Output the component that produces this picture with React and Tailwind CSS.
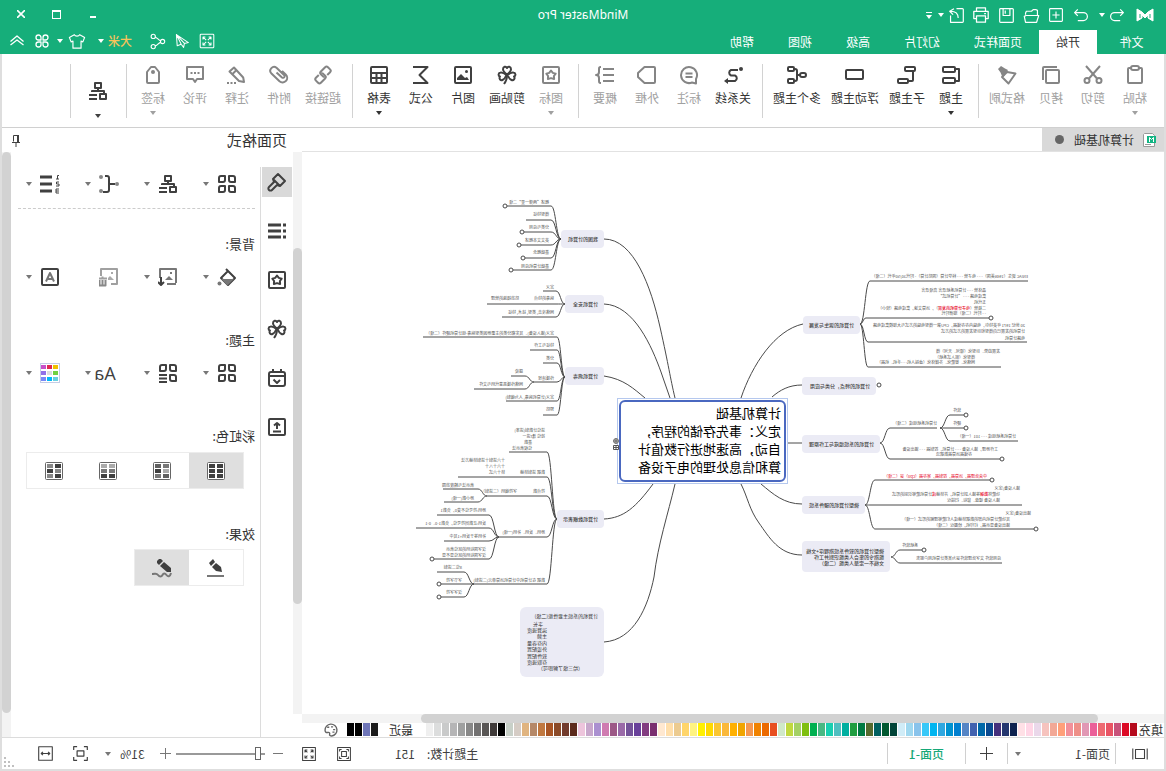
import { useState } from 'react';

const Svg = ({ size = 20, className = '', sw = 2, children }) => (
  <svg
    width={size}
    height={size}
    viewBox="0 0 20 20"
    fill="none"
    stroke="currentColor"
    strokeWidth={sw}
    strokeLinejoin="round"
    className={`shrink-0 ${className}`}
    aria-hidden="true"
  >
    {children}
  </svg>
);

const Caret = ({ className = '' }) => (
  <svg width="6" height="4" viewBox="0 0 6 4" className={`shrink-0 ${className}`} aria-hidden="true">
    <path d="M0 0h6L3 4z" fill="currentColor" />
  </svg>
);

const star = 'M10 5.5l1.8 2.4 2.9.7-1.8 2.4.2 3-3.1-.9-3.1.9.2-3-1.8-2.4 2.9-.7z';

const Clover = () => (
  <>
    <path d="M10 9.5C7.5 7.5 6 6 6 4.2 6 1.5 9 1 10 3c1-2 4-1.5 4 1.2 0 1.8-1.5 3.300-4 5.300z" />
    <path d="M9.5 10C7 8 5.5 7 3.5 7.5 1 8 1 11 3 11.5 1.5 13.5 3.5 16 5.5 15c2-1 3-2.5 4-5z" />
    <path d="M10.5 10C13 8 14.5 7 16.5 7.5 19 8 19 11 17 11.5c1.5 2-.5 4.5-2.5 3.5-2-1-3-2.5-4-5z" />
    <path d="M10 10c0 4 1 6.5 3 9" />
  </>
);

const FourSquares = () => (
  <>
    <path d="M2 4a2 2 0 0 1 2-2h4v4a2 2 0 0 1-2 2H2zM12 2h4a2 2 0 0 1 2 2v4h-4a2 2 0 0 1-2-2z" />
    <path d="M4 12h4v4a2 2 0 0 1-2 2H2v-4a2 2 0 0 1 2-2zM12 12h4a2 2 0 0 1 2 2v4h-4a2 2 0 0 1-2-2z" />
  </>
);

const OrgChart = () => (
  <>
    <path d="M7 2h6v5H7zM10 7v2M4 13V10h12v1M2 13h6v5H2z" />
    <path d="M11 14h8M11 18h8" />
  </>
);

const ICONS = {
  paste: <><rect x="3" y="3" width="14" height="15" rx="1" /><rect x="6" y="1" width="8" height="4" rx="2" fill="#fff" /></>,
  cut: <><path d="M3 1l11 12.5M17 1L6 13.5" /><circle cx="4" cy="15.5" r="2.5" /><circle cx="16" cy="15.5" r="2.5" /></>,
  copy: <><rect x="2" y="5" width="13" height="13" rx="1" /><path d="M4 2h13a1 1 0 0 1 1 1v12" /></>,
  brush: <><path d="M1.5 8.500L10 7l5 5-6.5 6.5z" /><path d="M9 5l3-1.5 4-2.5 3 3-2.5 3.5L15 11l-1.5 1z" fill="currentColor" stroke="none" /></>,
  topic: <><rect x="6" y="2" width="12" height="5" rx="1" /><rect x="6" y="13" width="12" height="5" rx="1" /><path d="M6 4H2v12h4" /></>,
  subtopic: <><rect x="2" y="2" width="10" height="4" rx="1" /><rect x="9" y="14" width="10" height="4" rx="1" /><path d="M4 6v9a1 1 0 0 0 1 1h4" /></>,
  floating: <rect x="2" y="5" width="17" height="9" rx="1" />,
  multi: <><rect x="1" y="8" width="6" height="4" rx="2" /><rect x="13" y="2" width="6" height="4" rx="1" /><rect x="13" y="14" width="6" height="4" rx="1" /><path d="M13 4h-1a2 2 0 0 0-2 2v8a2 2 0 0 0 2 2h1M7 10h3" /></>,
  relation: <><path d="M5 5h7a3 3 0 0 1 0 5.5H8A3 3 0 0 0 8 16h7" /><circle cx="2" cy="4" r="2" fill="currentColor" stroke="none" /><path d="M15 13l4 3-4 3z" fill="currentColor" stroke="none" /></>,
  callout: <><path d="M3 18.5V14A8 8 0 1 1 7 17.5z" /><path d="M6.5 8.500h7M6.5 12h7" /></>,
  boundary: <path d="M3 2h9.500L19 8v4l-6.5 6H3a1 1 0 0 1-1-1V3a1 1 0 0 1 1-1z" />,
  summary: <><path d="M1 4h11M1 10h11M1 16h11" /><path d="M14 2c2 0 2 .5 2 3v2c0 2 1 3 3 3-2 0-3 1-3 3v2c0 2.5 0 3-2 3" /></>,
  mark: <><rect x="2" y="2" width="16" height="16" rx="1" /><path d={star} /></>,
  clover: <Clover />,
  picture: <><rect x="2" y="2" width="16" height="16" rx="1" /><path d="M4 15l2-3 2 1 4-4 4 4v2z" fill="currentColor" stroke="none" /><circle cx="6.5" cy="6.5" r="1.5" fill="currentColor" stroke="none" /></>,
  formula: <path d="M18 2H3.5l8 8-8 8H18" />,
  table: <><rect x="2" y="2" width="16" height="16" rx="1" /><path d="M2 8h16M2 13h16M7.5 8v10M12.5 8v10" /></>,
  link: (
    <g transform="rotate(45 10 10)">
      <path d="M7 13H3a2 2 0 0 1-2-2V8a2 2 0 0 1 2-2h6a2 2 0 0 1 2 2v3a2 2 0 0 1-1 1.500" />
      <path d="M13 7h4a2 2 0 0 1 2 2v3a2 2 0 0 1-2 2h-6a2 2 0 0 1-2-2V9a2 2 0 0 1 1-1.500" />
    </g>
  ),
  clip: <path d="M12.5 7.5l-5.5 5a1.5 1.5 0 0 1-2-2.5l7.5-7.200a3.800 3.800 0 0 1 5.300 5.400l-8.300 8a4.600 4.600 0 0 1-6.500-.3 4.600 4.600 0 0 1 .3-6.400L7 6" />,
  note: <><path d="M3 17l.8-4.500L13 2.500 17.500 6.500 8 16z" /><path d="M10.500 5l4 4" /><path d="M11 18h2M14.500 18h2M18 18h2" /></>,
  comment: <><path d="M2 2h16v12h-6l-2 3-2-3H2z" /><path d="M5.500 8h2M9 8h2M12.500 8h2" /></>,
  tag: <><path d="M4 17V7l4-5h4l4 5v10a1 1 0 0 1-1 1H5a1 1 0 0 1-1-1z" /><circle cx="10" cy="7" r="2" fill="currentColor" stroke="none" /></>,
};

const RIBBON = [
  [
    { icon: 'paste', label: '粘贴', off: true, caret: true },
    { icon: 'cut', label: '剪切', off: true },
    { icon: 'copy', label: '拷贝', off: true },
    { icon: 'brush', label: '格式刷', off: true },
  ],
  [
    { icon: 'topic', label: '主题', caret: true },
    { icon: 'subtopic', label: '子主题' },
    { icon: 'floating', label: '浮动主题' },
    { icon: 'multi', label: '多个主题' },
  ],
  [
    { icon: 'relation', label: '关系线' },
    { icon: 'callout', label: '标注', off: true },
    { icon: 'boundary', label: '外框', off: true },
    { icon: 'summary', label: '概要', off: true },
  ],
  [
    { icon: 'mark', label: '图标', off: true, caret: true },
    { icon: 'clover', label: '剪贴画' },
    { icon: 'picture', label: '图片' },
    { icon: 'formula', label: '公式' },
    { icon: 'table', label: '表格', caret: true },
  ],
  [
    { icon: 'link', label: '超链接', off: true },
    { icon: 'clip', label: '附件', off: true },
    { icon: 'note', label: '注释', off: true },
    { icon: 'comment', label: '评论', off: true },
    { icon: 'tag', label: '标签', off: true, caret: true },
  ],
];

const COLORS = [
  '#b50a1c', '#dc0a25', '#c8527a', '#e95464', '#ee6a72', '#eb6099', '#e198b4', '#ee8f88', '#f2909a', '#ffa07a', '#f2a896', '#f6c3be', '#ead8ea', '#ffd6e6', '#ffe0e6',
  '#0f2350', '#24366f', '#442f7c', '#0a4a90', '#0068a8', '#4262af', '#5585c5', '#007fcf', '#0092d0', '#2ea7e0', '#00b5f0', '#38c8f8', '#89c3eb', '#a0d8ef', '#d0ecf7',
  '#004438', '#005830', '#006060', '#556b2f', '#007b43', '#1f9d3f', '#00afa0', '#50bfc0', '#19cfb0', '#48b883', '#00b050', '#7fbf10', '#a4d065', '#c0d840', '#d0e8c8',
  '#e84f20', '#eb6a00', '#f08200', '#f59850', '#f0a500', '#ffb000', '#fab83a', '#fac630', '#ffd900', '#fff000', '#fff380', '#ffd56a', '#eccb90', '#ffdfac', '#ffe8d0',
  '#7a2f70', '#823c80', '#68409a', '#745399', '#9a6aa8', '#9c5886', '#cf7bb0', '#aa90d0', '#c8a8cc', '#edc5dc',
  '#5c2b1c', '#723b2c', '#8b4a28', '#a85525', '#c07840', '#b58868', '#e0b480', '#d5ccc5', '#c8d0c8',
  '#000000', '#3f3a39', '#595655', '#727171', '#888888', '#9fa0a0', '#b5b5b6', '#c9caca', '#dcdddd', '#efefef',
];

// x, y, width, height, lines
const TOPICS = [
  [304, 164, 57, 18, ['计算机的诞生与发展']],
  [288, 225, 74, 18, ['计算机的特点，分类与应用']],
  [284, 283, 78, 18, ['计算机的系统组成与工作原理']],
  [299, 344, 63, 18, ['微型计算机的硬件系统']],
  [274, 389, 88, 31, ['微型计算机的软件系统指程序+文档', '能指令的集合人类能识别并工作', '文档不一定是人类能（二级）']],
  [560, 78, 43, 18, ['我国的计算机']],
  [560, 143, 39, 18, ['计算机安全']],
  [560, 215, 39, 18, ['计算机病毒']],
  [560, 358, 47, 18, ['计算机数据表示']],
];

const LINKS = [
  'M361 172C389 178 412 213 423 246',
  'M362 233C375 233 384 238 392 245',
  'M362 291H376',
  'M362 352C380 352 391 342 403 332',
  'M362 403C385 403 395 385 405 371S416 346 423 332',
  'M560 87C530 87 513 135 504 175S494 225 489 246',
  'M560 152C530 153 512 195 503 220L494 246',
  'M560 224C540 227 530 237 519 246',
  'M560 367C540 366 528 355 511 332',
  'M560 490C530 488 516 455 510 425C506 392 496 362 489 332',
];

// start x, start y, bend x, line y, line end x, folded marker
const BRANCHES = [
  [304, 172, 294, 129, 136], [304, 172, 298, 166, 175, 1], [304, 172, 296, 190, 137], [304, 172, 296, 215, 163],
  [284, 291, 274, 276, 227], [284, 291, 274, 307, 164, 1],
  [224, 276, 214, 263, 200, 1], [224, 276, 214, 276, 200, 1], [224, 276, 214, 289, 146],
  [299, 353, 289, 328, 174, 1], [299, 353, 292, 353, 142], [299, 353, 289, 377, 130, 1],
  [273, 405, 264, 398, 242, 1], [273, 405, 264, 411, 162],
  [603, 87, 613, 54, 657, 1], [603, 87, 613, 68, 638], [603, 87, 613, 80, 640, 1], [603, 87, 613, 93, 643, 1], [603, 87, 613, 106, 639, 1], [603, 87, 613, 118, 651, 1],
  [599, 152, 608, 139, 621], [599, 152, 608, 152, 677], [599, 152, 608, 165, 662],
  [599, 225, 607, 185, 741], [599, 225, 607, 198, 634], [599, 225, 607, 211, 621], [599, 225, 607, 230, 630], [599, 225, 607, 249, 658], [599, 225, 607, 263, 621],
  [630, 230, 639, 224, 653], [630, 230, 639, 237, 690],
  [607, 367, 617, 300, 655], [607, 367, 617, 325, 706], [607, 367, 617, 344, 677], [607, 367, 617, 385, 665], [607, 367, 617, 432, 690],
  [677, 344, 686, 337, 721], [677, 344, 686, 350, 720],
  [665, 385, 675, 363, 727], [665, 385, 675, 376, 748], [665, 385, 675, 389, 720], [665, 385, 675, 407, 730, 1],
  [690, 432, 700, 420, 727], [690, 432, 700, 432, 723, 1], [690, 432, 700, 445, 723, 1],
];

// x, centre y, text
const NOTES = [
  [136, 124, 'ENIAC 诞生（1946美国）- - - 电子管 - - - 科学计算（国防计算）- 时代30/50年代（二级）'],
  [178, 138, '晶体管 - - - 计算机系统语言 高级语言'],
  [178, 144, '集成电路 - - - “计算机式”'],
  [178, 150, '五代机'],
  [178, 161, '- - 时代（二级）规律时代'],
  [139, 173, '20 世纪 1971 年英特尔，电脑内存存储器，CPU第一微型电脑的方式与大规模集成电路'],
  [139, 179, '计算机的发展已向微型和巨型发展的方式的方式'],
  [139, 186, '电路计算机'],
  [164, 199, '发展趋势、巨型化（银河、天河）微'],
  [189, 205, '微型化（嵌入式系统）'],
  [189, 210, '网络化、智能化、多媒体化（虚拟人机- - -手机、机器）'],
  [203, 258, '软件'],
  [203, 271, '硬件'],
  [227, 271, '计算机系统组成（二级）'],
  [148, 284, '计算机系统组成 - - - 101（一级）'],
  [166, 297, '工作原理，输入设备 - - - 计算机，控制器 - - - 输出设备'],
  [192, 302, '存储器运算器数据流'],
  [144, 336, '输入设备/定义'],
  [164, 348, '输入设备 键盘、鼠标、扫描仪'],
  [133, 361, '输出设备/定义'],
  [154, 367, '其功能计算机内部的数据转换成人们能够理解的形式（一级）'],
  [154, 373, '输出设备显示器，打印机，绘图仪（二级）'],
  [246, 393, '系统软件'],
  [163, 406, '应用软件 文字处理软件是为某类计算机用户服务'],
  [615, 50, '概述“两弹一星”二级'],
  [615, 62, '微型特征'],
  [615, 75, '分类与应用'],
  [615, 88, '英文文本概述'],
  [615, 100, '基础概念'],
  [615, 114, '基础计算机应用'],
  [610, 135, '定义'],
  [610, 146, '病毒的特点'],
  [645, 146, '防范措施的管理'],
  [610, 160, '网络攻击, 类型, 技术, 特征'],
  [610, 181, '定义(输入设备)、其实都分类的主要原因类型病毒-组计算机硬件（二级）'],
  [610, 193, '特征与工作'],
  [610, 206, '分类'],
  [610, 226, '传播途径'],
  [641, 219, '感染'],
  [641, 232, '网络传播恶意代码与文件'],
  [610, 245, '定义(计算机病毒, 人为编制)'],
  [610, 257, '预防'],
  [619, 278, '进位计数制(进率)'],
  [619, 284, '按位 逢r进一'],
  [632, 290, '基数'],
  [632, 296, '位权表示法'],
  [659, 308, '十六进制十进制转换方法'],
  [659, 314, '十六十八十'],
  [659, 320, '转十六式'],
  [619, 320, '数据 进制转换'],
  [619, 339, '符点数'],
  [647, 339, '字符编码（二进制）'],
  [690, 333, '表示法与精度范围'],
  [690, 346, '原小数(一级)'],
  [619, 380, '原码、反码、补码(一级)'],
  [678, 358, '原码:符号位不变0，负数1'],
  [678, 371, '反码:正数同符号位，负数1-0、0-1'],
  [678, 384, '补码等于反码+1其中'],
  [678, 397, '汉字国标码的区位表示'],
  [678, 403, '汉字国标码的区位显不显'],
  [619, 428, '数据 在计算机中计算机运算单元(二进制)'],
  [702, 415, '8位二进制'],
  [702, 428, '字节字符'],
  [702, 440, '汉字字符'],
];

const INDICATORS = [
  [566, 464, '计算机的系统主要性能(二级)'],
  [621, 472, '字长'],
  [617, 478, '运算速度'],
  [617, 484, '主频'],
  [617, 491, '内存容量'],
  [617, 497, '外设配置'],
  [617, 504, '软件配置'],
  [617, 510, '存取速度'],
  [581, 516, '（给三级了解即可）'],
];

const branchPath = ([x0, y0, x1, y1, x2]) => {
  const mid = (x0 + x1) / 2;
  return `M${x0} ${y0}C${mid} ${y0} ${mid} ${y1} ${x1} ${y1}H${x2}`;
};

const Note = ({ x, y, className = 'text-[4px] text-[#555]', children }) => (
  <span className={`absolute leading-[6px] whitespace-nowrap ${className}`} style={{ left: x, top: y - 3 }}>
    {children}
  </span>
);

const MindMap = () => (
  <div className="relative min-w-0 flex-1 overflow-hidden bg-white">
    <svg width="862" height="562" className="absolute top-0 left-0" fill="none" stroke="#4a4a4a" aria-hidden="true">
      {LINKS.map((d) => <path key={d} d={d} />)}
      {BRANCHES.map((b, i) => (
        <g key={i}>
          <path d={branchPath(b)} />
          {b[5] && <circle cx={b[4] + (b[4] < 430 ? -2 : 2)} cy={b[3]} r="2" fill="#fff" />}
        </g>
      ))}
      <circle cx="285" cy="233" r="2" fill="#fff" />
    </svg>

    {TOPICS.map(([x, y, w, h, lines]) => (
      <div
        key={lines[0]}
        className="absolute flex flex-col justify-center rounded-sm bg-[#ebebf5] pl-[6px] text-[5px] leading-[6px] font-medium whitespace-nowrap text-[#444]"
        style={{ left: x, top: y, width: w, height: h }}
      >
        {lines.map((line) => <span key={line}>{line}</span>)}
      </div>
    ))}
    <div className="absolute top-[455px] left-[560px] h-[70px] w-[84px] rounded-md bg-[#ebebf5]" />
    {INDICATORS.map(([x, y, t]) => (
      <Note key={t} x={x} y={y} className="text-[5px] text-[#333]">{t}</Note>
    ))}

    {NOTES.map(([x, y, t]) => <Note key={`${x}-${y}`} x={x} y={y}>{t}</Note>)}
    <Note x={178} y={156}>
      二极管（<b className="font-medium text-[#e60022]">电子计算机的发展</b>），运算文速，集成电路（较小）
    </Note>
    <Note x={177} y={324} className="text-[4px] text-[#e60022]">中央处理器，运算器，控制器，寄存器（cpu）是（二级）</Note>
    <Note x={164} y={342}>
      功能将<b className="font-medium text-[#e60022]">数据</b>等输入到计算机，并转换<b className="font-medium text-[#e60022]">成</b>计算机能够识别的形式
    </Note>

    {/* Central topic */}
    <div className="absolute top-[246px] left-[376px] h-[86px] w-[171px] border border-[#b5c8ee] bg-white p-px">
      <div className="h-full rounded-md border-2 border-[#4a68c0] pt-[2px] pl-[3px] text-[13px] leading-[18px] whitespace-nowrap text-black">
        计算机基础<br />
        定义：事先存储的程序,<br />
        自动，高速地进行数值计<br />
        算和信息处理的电子设备
      </div>
    </div>
    <svg width="6" height="12" viewBox="0 0 6 12" className="absolute top-[286px] left-[545px]" fill="#fff" stroke="#555" aria-hidden="true">
      <circle cx="3" cy="3" r="2.4" />
      <path d="M1 3h4M3 1v4M.5 7.5h5v4h-5zM.5 9.5h5M3 7.5v4" />
    </svg>
  </div>
);

const QuickButton = ({ label, children, className = 'w-[25px]' }) => (
  <button aria-label={label} className={`flex h-full items-center justify-center ${className}`}>{children}</button>
);

const TitleBar = () => (
  <div className="flex h-[30px] items-center">
    <div className="flex h-full flex-1 items-center">
      <svg width="18" height="14" viewBox="0 0 18 14" className="ml-3" aria-hidden="true">
        <path d="M1 1v12l5-3V7l3 3 3-3v3l5 3V1L12 4 9 7 6 4z" fill="#fff" stroke="#fff" strokeLinejoin="round" />
        <path d="M4 6v4M14 6v4" stroke="#16ae7a" />
      </svg>
      <QuickButton label="撤销" className="ml-[7px] w-6">
        <Svg size={16} sw={1.5}><path d="M6 3L2 7l4 4M2 7h11a5 5 0 0 1 0 10H6" /></Svg>
      </QuickButton>
      <Caret />
      <QuickButton label="重做" className="ml-[6px] w-6">
        <Svg size={16} sw={1.5}><path d="M14 3l4 4-4 4M18 7H7a5 5 0 0 0 0 10h7" /></Svg>
      </QuickButton>
      <QuickButton label="新建">
        <Svg size={16} sw={1.4}><rect x="2" y="2" width="16" height="16" rx="1" /><path d="M10 5.5v9M5.5 10h9" /></Svg>
      </QuickButton>
      <QuickButton label="打开">
        <Svg size={17} sw={1.4}><path d="M3 10V4l2-1h3l2 2h6l1 2v2M1.500 10h15l2 1-1.500 7H4z" /></Svg>
      </QuickButton>
      <QuickButton label="保存">
        <Svg size={17} sw={1.4}><rect x="2" y="2" width="16" height="16" rx="1" /><path d="M6 2v8h8V2M11.5 4v4" /></Svg>
      </QuickButton>
      <QuickButton label="打印">
        <Svg size={18} sw={1.4}><path d="M5 6V2h10v4M5 14H2V6h16v8h-3M5 11h10v7H5zM4.500 8.500h2" /></Svg>
      </QuickButton>
      <QuickButton label="导出">
        <Svg size={17} sw={1.4}><path d="M10 2H3a1 1 0 0 0-1 1v14a1 1 0 0 0 1 1h14V10M8 13c0-5 3-8 9-8M13 2l5 3-4 4" /></Svg>
      </QuickButton>
      <Caret />
      <button aria-label="更多" className="ml-[6px] flex flex-col items-center gap-px">
        <span className="h-px w-[6px] bg-white" />
        <Caret className="mt-px" />
      </button>
    </div>
    <h1 className="font-['Noto_Sans',sans-serif] text-xs">MindMaster Pro</h1>
    <div className="flex h-full flex-1 justify-end">
      <QuickButton label="最小化" className="w-9"><span className="mt-[3px] h-[2px] w-[6px] bg-white" /></QuickButton>
      <QuickButton label="最大化" className="w-9"><span className="mb-[2px] h-[9px] w-[9px] border border-t-2 border-white" /></QuickButton>
      <QuickButton label="关闭" className="mr-[3px] w-9">
        <svg width="8" height="8" viewBox="0 0 8 8" className="mb-[3px]" aria-hidden="true">
          <path d="M0 0l8 8M8 0L0 8" stroke="#fff" strokeWidth="1.6" />
        </svg>
      </QuickButton>
    </div>
  </div>
);

const TABS = ['开始', '页面样式', '幻灯片', '高级', '视图', '帮助'];

const MenuBar = () => {
  const [tab, setTab] = useState('开始');
  return (
    <div className="flex h-6 items-center text-xs">
      <button className="h-full w-[69px]">文件</button>
      {TABS.map((t) => (
        <button
          key={t}
          onClick={() => setTab(t)}
          className={`h-full px-[17px] ${t === tab ? 'bg-white text-[#333]' : ''}`}
        >
          {t}
        </button>
      ))}
      <div className="mr-[7px] mb-[2px] ml-auto flex h-full items-center">
        <button aria-label="全屏" className="w-5">
          <Svg className="mx-auto" size={16} sw={1.3}>
            <rect x="1.5" y="1.5" width="17" height="17" rx="1" />
            <path d="M5 8V5h3M12 5h3v3M15 12v3h-3M8 15H5v-3M5 5l4 4M15 5l-4 4M15 15l-4-4M5 15l4-4" />
          </Svg>
        </button>
        <button aria-label="发送" className="ml-[5px] w-5">
          <Svg className="mx-auto" size={16} sw={1.3}><path d="M17 2L2 12l5 1 1 5 3-4 5 2zM17 2L7 13M17 2l-6 12" /></Svg>
        </button>
        <button aria-label="分享" className="ml-[5px] w-5">
          <Svg className="mx-auto" size={17} sw={1.3}>
            <circle cx="4" cy="10" r="2.5" /><circle cx="15" cy="4" r="2.5" /><circle cx="15" cy="16" r="2.5" />
            <path d="M6 11c3 0 4 4 7 4M6 9c3 0 4-4 7-4" />
          </Svg>
        </button>
        <button className="ml-[15px] flex items-center gap-1 font-medium text-[#f8c35a]">
          大米<Caret className="text-white" />
        </button>
        <button aria-label="皮肤" className="ml-[11px] flex items-center gap-1">
          <Svg size={18} sw={1.3} className="mx-px"><path d="M7 3L1.500 6 3.500 11l2-1v8h9v-8l2 1 2-5L13 3c-1 2-5 2-6 0z" /></Svg>
          <Caret />
        </button>
        <button aria-label="应用" className="ml-[5px]">
          <Svg sw={1.3}>
            <path d="M9 9H6.500A2.500 2.500 0 1 1 9 6.500zM11 9V6.500A2.500 2.500 0 1 1 13.500 9zM9 11v2.500A2.500 2.500 0 1 1 6.500 11zM11 11h2.500a2.500 2.500 0 1 1-2.500 2.500z" />
          </Svg>
        </button>
        <button aria-label="折叠" className="ml-[5px]">
          <Svg sw={1.3}><path d="M3.500 10.500L10 5l6.500 5.500M3.500 14L10 9l6.500 5" /></Svg>
        </button>
      </div>
    </div>
  );
};

const Divider = () => <span className="mr-[6px] ml-[5px] h-[54px] w-px bg-[#d2d2d2]" />;

const Ribbon = () => (
  <div className="flex h-[74px] border-b border-[#d0d0d0] bg-white pt-[10px] pl-2">
    {RIBBON.map((group, i) => (
      <div key={i} className="flex">
        {group.map(({ icon, label, off, caret }) => (
          <button
            key={label}
            disabled={off}
            className={`flex min-w-[42px] flex-col items-center px-[5px] text-xs leading-[18px] ${off ? 'text-[#a0a0a0]' : 'text-[#333]'}`}
          >
            <Svg className={`mt-px mb-[4px] ${off ? 'text-[#858585]' : 'text-[#404040]'}`}>{ICONS[icon]}</Svg>
            {label}
            {caret && <Caret className="mt-[4px]" />}
          </button>
        ))}
        <Divider />
      </div>
    ))}
    <button aria-label="布局" className="flex w-[44px] flex-col items-center pt-[17px] text-[#404040]">
      <Svg><OrgChart /></Svg>
      <Caret className="mt-[13px]" />
    </button>
    <Divider />
  </div>
);

const Scroll = ({ className, thumb }) => (
  <div className={`shrink-0 bg-[#f3f3f3] ${className}`}>
    <div className={`rounded-full bg-[#d2d2d2] ${thumb}`} />
  </div>
);

const Swatch = ({ color }) => (
  <button aria-label={color} className="h-[13px] w-[7px] shrink-0" style={{ backgroundColor: color }} />
);

const Palette = () => (
  <div className="flex h-[14px] items-start bg-white text-xs leading-[14px] text-[#333]">
    <span className="w-[27px] shrink-0 pl-px">填充</span>
    <div className="flex gap-px">{COLORS.map((c) => <Swatch key={c} color={c} />)}</div>
    <span className="ml-[13px] shrink-0">最近</span>
    <div className="ml-[11px] flex gap-px">
      {['#1b1b1b', '#6f76b8', '#000', '#000001'].map((c) => <Swatch key={c} color={c} />)}
    </div>
    <button aria-label="更多颜色" className="ml-[9px]">
      <Svg size={14} className="text-[#666]">
        <path d="M9 18.500a8.500 8.500 0 1 1 9.500-8c0 3-2 3.500-4 3-2.500-.5-3 1-2.500 2.500s-1 2.500-3 2.500z" />
        <path d="M4 9.500h3M7 5.500h3M12.500 6h3M5 13h3" />
      </Svg>
    </button>
  </div>
);

const SIDE_TABS = [
  ['格式', <path key="a" d="M9 2L2 9l5 5 3-1 5 5a2 2 0 0 0 3-3l-5-5 1-3zM14 7l-7 7" />],
  ['大纲', <path key="b" strokeWidth="3" d="M1 4h3M6 4h13M1 10h3M6 10h13M1 16h3M6 16h13" />],
  ['图标', <g key="c"><rect x="2" y="2" width="16" height="16" rx="1" /><path d={star} /></g>],
  ['剪贴画', <Clover key="d" />],
  ['任务', <g key="e"><rect x="2" y="4" width="16" height="14" rx="2" /><path d="M2 8h16M6 1v4M14 1v4M7 12l3 3 3.500-3.500" /></g>],
  ['导出', <g key="f"><rect x="2" y="2" width="16" height="16" rx="1" /><path d="M6 14.500h8M10 12V6M7 8.500L10 6l3 2.500" /></g>],
];

const ToolButton = ({ label, children, caret = true, className = 'text-[#404040]' }) => (
  <button aria-label={label} className={`flex w-[59px] shrink-0 items-center gap-2 ${className}`}>
    <Svg>{children}</Svg>
    {caret && <Caret className="text-[#777]" />}
  </button>
);

const Grid = ({ tones }) => (
  <svg width="18" height="18" viewBox="0 0 18 18" aria-hidden="true">
    <rect x=".5" y=".5" width="17" height="17" rx="1" fill="#fff" stroke="#666" />
    {tones.map((c, i) => <rect key={i} x={i % 2 ? 10 : 2} y={2 + Math.floor(i / 2) * 5} width="6" height="4" fill={c} />)}
  </svg>
);

const RAINBOW = [
  ['#404040', '#404040', '#404040', '#404040', '#404040', '#404040'],
  ['#777', '#606060', '#aaa', '#404040', '#606060', '#777'],
  ['#aaa', '#aaa', '#777', '#777', '#404040', '#404040'],
  ['#404040', '#888', '#888', '#404040', '#404040', '#888'],
];

const Heading = ({ children }) => <h3 className="text-[13px] leading-5 text-[#333]">{children}</h3>;

const FormatPanel = () => {
  const [rainbow, setRainbow] = useState(0);
  const [effect, setEffect] = useState(1);
  return (
    <aside className="flex w-[291px] shrink-0 flex-col bg-white">
      <header className="flex h-6 items-center justify-between pr-2 pl-[6px]">
        <h2 className="text-[15px] text-[#333]">页面格式</h2>
        <button aria-label="固定" className="text-[#404040]">
          <svg width="12" height="14" viewBox="0 0 12 14" fill="none" stroke="currentColor" aria-hidden="true">
            <path d="M3.500 2.500h5v6M2 9.500h8M6 10v4" />
            <path d="M4 2v7" strokeWidth="2" />
          </svg>
        </button>
      </header>
      <div className="flex flex-1">
        <nav className="flex w-8 shrink-0 flex-col gap-[19px] pt-[15px] pl-px">
          {SIDE_TABS.map(([label, icon], i) => (
            <button
              key={label}
              aria-label={label}
              className={`flex h-[30px] w-[30px] items-center justify-center text-[#404040] ${i === 0 ? 'bg-[#d9d9d9]' : ''}`}
            >
              <Svg>{icon}</Svg>
            </button>
          ))}
        </nav>
        <div className="mt-[15px] min-w-0 flex-1 border-l border-[#dcdcdc] pl-[5px]">
          <div className="mr-[7px] flex h-[42px] items-center border-b border-dashed border-[#ccc] pb-[7px] pl-[18px]">
            <ToolButton label="布局"><FourSquares /></ToolButton>
            <ToolButton label="结构"><OrgChart /></ToolButton>
            <ToolButton label="连线">
              <path d="M4 10h6M16 18h-4a2 2 0 0 1-2-2V4a2 2 0 0 1 2-2h2" />
              <g fill="#888" stroke="none"><circle cx="2" cy="10" r="2" /><circle cx="18" cy="3" r="2" /><circle cx="18" cy="17" r="2" /></g>
            </ToolButton>
            <ToolButton label="编号">
              <path strokeWidth="3" d="M8 3h12M8 10h12M8 17h12" />
              <path strokeWidth="1" d="M1 1.500h1.500V5M1 5h3M1 8h2.500v2H1v2h3M1 15h3v4H1M1 17h3" />
            </ToolButton>
          </div>

          <div className="mt-[25px]"><Heading>背景:</Heading></div>
          <div className="mt-[13px] flex pl-[18px]">
            <ToolButton label="填充">
              <path d="M9 4l7 7-7 7-7-7 9-9" /><path d="M3 12h13l-6.500 6.500z" fill="#777" stroke="none" />
              <circle cx="17.500" cy="16.500" r="2" fill="#777" stroke="none" />
            </ToolButton>
            <ToolButton label="背景图片">
              <path d="M2 16V2h16v9M2 17h9" stroke="#777" /><path d="M5 13l4-4 4 4zM6 5h2v2H6z" fill="#777" stroke="none" />
              <path d="M17 10v8M14 15l3 3 3-3" />
            </ToolButton>
            <ToolButton label="删除背景图片" caret={false} className="text-[#a0a0a0]">
              <path d="M8 17H2V2h16v7M12 11.500h8M16.500 9.500v2" />
              <path d="M5 13l4-4 2 2v2zM6 5h2v2H6z" fill="#aaa" stroke="none" />
              <path d="M13.500 13v5.500h6V13M16.500 13v5" stroke="#888" />
            </ToolButton>
            <ToolButton label="水印">
              <rect x="2" y="2" width="16" height="16" rx="1" /><path d="M6 14.500L10 6l4 8.500M7.500 12h5" stroke="#777" />
            </ToolButton>
          </div>

          <div className="mt-[43px]"><Heading>主题:</Heading></div>
          <div className="mt-[13px] flex pl-[18px]">
            <ToolButton label="主题样式"><FourSquares /></ToolButton>
            <ToolButton label="主题列表">
              <path d="M2 4a2 2 0 0 1 2-2h4v4a2 2 0 0 1-2 2H2zM12 2h4a2 2 0 0 1 2 2v4h-4a2 2 0 0 1-2-2zM2 14a2 2 0 0 1 2-2h4v4a2 2 0 0 1-2 2H2z" />
              <path d="M11 12h8M11 15.500h8M11 19h8" />
            </ToolButton>
            <button aria-label="主题字体" className="flex w-[59px] shrink-0 items-center text-[#404040]">
              <span className="w-7 font-['Open_Sans',sans-serif] text-lg leading-5 font-medium">Aa</span>
              <Caret className="text-[#777]" />
            </button>
            <ToolButton label="主题颜色">
              <rect x="0" y="0" width="20" height="20" stroke="#c5cce6" />
              <g stroke="none">
                <path fill="#f0c000" d="M2 2h5v4H2z" /><path fill="#e02850" d="M8 2h5v4H8z" /><path fill="#c850c8" d="M14 2h5v4h-5z" />
                <path fill="#70d040" d="M2 8h5v4H2z" /><path fill="#ddd" d="M8 8h5v4H8z" /><path fill="#9070e8" d="M14 8h5v4h-5z" />
                <path fill="#68d0e0" d="M2 14h5v4H2z" /><path fill="#00b8f8" d="M8 14h5v4H8z" /><path fill="#7888f8" d="M14 14h5v4h-5z" />
              </g>
            </ToolButton>
          </div>

          <div className="mt-[43px]"><Heading>彩虹色:</Heading></div>
          <div className="mt-[6px] ml-[11px] inline-flex border border-[#ececec]">
            {RAINBOW.map((tones, i) => (
              <button
                key={i}
                aria-label={`彩虹色 ${i + 1}`}
                onClick={() => setRainbow(i)}
                className={`flex h-[35px] w-[54px] items-center justify-center ${i === rainbow ? 'bg-[#dfdfdf]' : ''}`}
              >
                <Grid tones={tones} />
              </button>
            ))}
          </div>

          <div className="mt-[35px]"><Heading>效果:</Heading></div>
          <div className="mt-[5px] ml-[11px] inline-flex border border-[#ececec]">
            {['直线', '手绘'].map((name, i) => (
              <button
                key={name}
                aria-label={name}
                onClick={() => setEffect(i)}
                className={`flex h-[35px] w-[54px] items-center justify-center text-[#404040] ${i === effect ? 'bg-[#dfdfdf]' : ''}`}
              >
                {i === 0 ? (
                  <Svg>
                    <path d="M4 14l1-5 5-4 4 4-4 4zM11 4l2-3 4 4-2 3z" fill="currentColor" stroke="none" />
                    <path d="M2 18h17" stroke="#777" />
                  </Svg>
                ) : (
                  <Svg>
                    <path d="M1 14V10l7-6 4 4-7 6zM9 3l2-2h2l2 2v2l-2 2z" fill="currentColor" stroke="none" />
                    <path d="M1 15c1 4 3 4 4.500 2s3-2 4 0 3 2 4.500 0 2-1 6-1" stroke="#777" />
                  </Svg>
                )}
              </button>
            ))}
          </div>
        </div>
        <Scroll className="w-[9px]" thumb="h-[561px]" />
      </div>
    </aside>
  );
};

const FRAME = 'M2 2h16v16H2z';

const StatusBar = () => (
  <footer className="flex h-8 items-center border-t border-[#dcdcdc] bg-white text-xs text-[#404040]">
    <button aria-label="页面列表" className="flex w-12 justify-center">
      <Svg size={18} sw={1.2}><path d="M2 4v12M18 4v12M5 5h10v10H5z" /></Svg>
    </button>
    <span className="h-[21px] w-px bg-[#d0d0d0]" />
    <button className="flex w-[107px] items-center justify-between pr-[7px] pl-[5px]">
      页面-1<Caret className="text-[#777]" />
    </button>
    <span className="h-[21px] w-px bg-[#d0d0d0]" />
    <button aria-label="新建页面" className="flex w-[41px] justify-center">
      <svg width="13" height="13" viewBox="0 0 13 13" stroke="currentColor" aria-hidden="true"><path d="M6.500 0v13M0 6.500h13" /></svg>
    </button>
    <span className="h-[21px] w-px bg-[#d0d0d0]" />
    <button className="w-[77px] font-medium text-[#16a878]">页面-1</button>
    <span className="h-[21px] w-px bg-[#d0d0d0]" />
    <span className="ml-auto flex gap-3">主题计数:<span>151</span></span>
    <button aria-label="适合页面" className="ml-[43px]">
      <Svg size={16} sw={1.3}><path d={FRAME} /><path d="M7 7h6v6H7zM4.500 7V4.500H7M13 4.500h2.500V7M15.500 13v2.500H13M7 15.500H4.500V13" /></Svg>
    </button>
    <button aria-label="全屏" className="ml-[19px]">
      <Svg size={16} sw={1.3}><path d={FRAME} /><path d="M5 8V5h3M12 5h3v3M15 12v3h-3M8 15H5v-3M5 5l3 3M15 5l-3 3M15 15l-3-3M5 15l3-3" /></Svg>
    </button>
    <button aria-label="缩小" className="ml-[18px] flex h-4 w-[10px] items-center"><span className="h-px w-full bg-[#777]" /></button>
    <input
      type="range"
      aria-label="缩放"
      min="10"
      max="400"
      defaultValue="31"
      className="ml-[8px] h-[13px] w-[89px] appearance-none bg-[linear-gradient(#999,#999)] bg-[length:100%_2px] bg-center bg-no-repeat [&::-webkit-slider-thumb]:h-[13px] [&::-webkit-slider-thumb]:w-[6px] [&::-webkit-slider-thumb]:appearance-none [&::-webkit-slider-thumb]:border [&::-webkit-slider-thumb]:border-[#666] [&::-webkit-slider-thumb]:bg-white"
    />
    <button aria-label="放大" className="ml-[5px]">
      <svg width="11" height="11" viewBox="0 0 11 11" stroke="#777" aria-hidden="true"><path d="M5.500 0v11M0 5.500h11" /></svg>
    </button>
    <span className="ml-[14px] w-[27px] text-center">31%</span>
    <Caret className="ml-[8px] text-[#777]" />
    <button aria-label="适合窗口" className="ml-[16px]">
      <Svg size={17} sw={1.4}><path d="M6 2H2v4M14 2h4v4M18 14v4h-4M6 18H2v-4M6 7h8v6H6z" /></Svg>
    </button>
    <button aria-label="适合宽度" className="ml-[18px]">
      <Svg size={17} sw={1.3}><path d={FRAME} /><path d="M4.500 10h11M7 8l-2 2 2 2M13 8l2 2-2 2" /></Svg>
    </button>
    <svg width="10" height="10" viewBox="0 0 10 10" className="mt-[17px] mr-[2px] ml-[23px]" fill="#c0c0c0" aria-hidden="true">
      <path d="M8 0h2v2H8zM4 4h2v2H4zM8 4h2v2H8zM0 8h2v2H0zM4 8h2v2H4zM8 8h2v2H8z" />
    </svg>
  </footer>
);

const App = () => (
  <div className="flex min-h-screen -scale-x-100 flex-col overflow-hidden bg-white font-['Noto_Sans_CJK_SC',sans-serif]">
    <div className="bg-[#16ae7a] text-white">
      <TitleBar />
      <MenuBar />
    </div>
    <div className="flex flex-1 flex-col border-x-2 border-b-2 border-[#dedede]">
      <Ribbon />
      <div className="flex flex-1">
        <main className="flex min-w-0 flex-1 flex-col">
          <div className="mr-[9px] flex h-6 border-b border-[#e2e2e2]">
            <button className="flex w-[122px] items-center bg-[#d9d9d9] pl-[8px] text-xs text-[#333]">
              <svg width="14" height="14" viewBox="0 0 14 14" aria-hidden="true">
                <path d="M3.500.5h8l1 1v12h-11v-11z" fill="#fff" stroke="#999" />
                <path d="M5 11.500h6" stroke="#999" />
                <path d="M0 3h9v7H0z" fill="#12b483" />
                <path d="M2.500 9V4.500l2 2 2-2V9" fill="none" stroke="#fff" />
              </svg>
              <span className="ml-[8px]">计算机基础</span>
              <span className="ml-[10px] h-[9px] w-[9px] rounded-full bg-[#666]" />
            </button>
          </div>
          <div className="flex flex-1">
            <MindMap />
            <Scroll className="w-[9px] pt-24" thumb="h-[356px]" />
          </div>
          <Scroll className="mr-[9px] h-[9px] pl-[66px]" thumb="h-full w-[677px]" />
          <Palette />
        </main>
        <FormatPanel />
      </div>
      <StatusBar />
    </div>
  </div>
);

export default App;
